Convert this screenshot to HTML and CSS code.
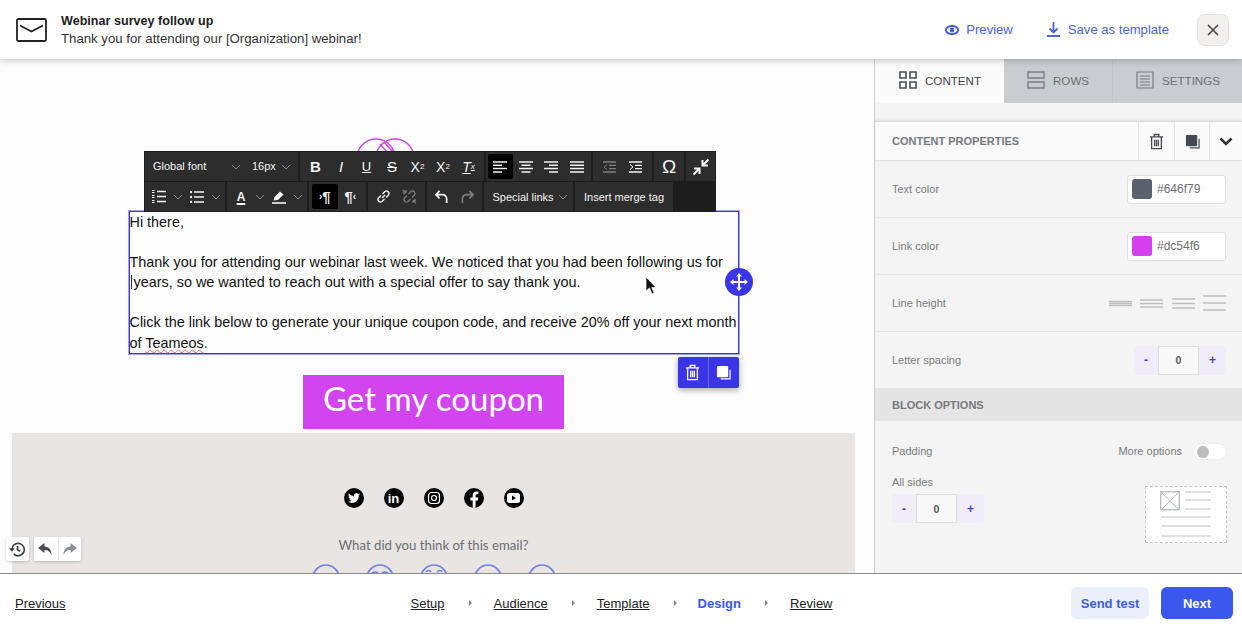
FILE: index.html
```html
<!DOCTYPE html>
<html lang="en">
<head>
    <meta charset="UTF-8">
    <meta name="viewport" content="width=device-width, initial-scale=1.0">
    <link rel="stylesheet" href="styles.css">
    <title>Webinar survey follow up</title>
</head>
<body>
<svg class="defs" width="0" height="0">
    <symbol id="chev" viewBox="0 0 14 6"><path d="M3 1l4 4 4-4" fill="none" stroke="currentColor" stroke-width="1"/></symbol>
    <symbol id="trash" viewBox="0 0 16 18"><path d="M1 4h14M5.500 4V1.500h5V4M2.800 4v12.500h10.400V4M6 7v7M8 7v7M10 7v7" fill="none" stroke="currentColor" stroke-width="1.400"/></symbol>
    <symbol id="copy" viewBox="0 0 16 16"><path d="M5 14.700h10V5" fill="none" stroke="currentColor" stroke-width="1.300"/><rect x="1" y="1" width="12" height="12" rx="1" fill="currentColor"/></symbol>
    <symbol id="undo" viewBox="0 0 16 16"><path d="M6 2L2 6l4 4M2 6h7a4.500 4.500 0 0 1 4.500 4.500V15" fill="none" stroke="currentColor" stroke-width="1.800"/></symbol>
    <symbol id="redo" viewBox="0 0 16 16"><path d="M10 2l4 4-4 4M14 6H7a4.500 4.500 0 0 0-4.500 4.500V15" fill="none" stroke="currentColor" stroke-width="1.800"/></symbol>
    <symbol id="al" viewBox="0 0 14 12"><path d="M0 1h14M0 4.300h9M0 7.600h14M0 11h9" stroke="currentColor" stroke-width="1.500"/></symbol>
    <symbol id="ac" viewBox="0 0 14 12"><path d="M0 1h14M2.500 4.300h9M0 7.600h14M2.500 11h9" stroke="currentColor" stroke-width="1.500"/></symbol>
    <symbol id="ar" viewBox="0 0 14 12"><path d="M0 1h14M5 4.300h9M0 7.600h14M5 11h9" stroke="currentColor" stroke-width="1.500"/></symbol>
    <symbol id="aj" viewBox="0 0 14 12"><path d="M0 1h14M0 4.300h14M0 7.600h14M0 11h14" stroke="currentColor" stroke-width="1.500"/></symbol>
</svg>

<header class="topbar">
    <svg class="mail-icon" viewBox="0 0 32 24"><rect x="1" y="1" width="29" height="22" rx="1.500" fill="none" stroke="#222" stroke-width="1.800"/><path d="M4 7.500l11.500 6 11.500-6" fill="none" stroke="#222" stroke-width="1.800"/></svg>
    <div class="topbar-title">
        <div class="title-main">Webinar survey follow up</div>
        <div class="title-sub">Thank you for attending our [Organization] webinar!</div>
    </div>
    <a class="top-link link-preview">
        <svg width="14" height="10" viewBox="0 0 14 10"><ellipse cx="7" cy="5" rx="6.100" ry="4.100" fill="none" stroke="currentColor" stroke-width="2"/><circle cx="7" cy="5" r="2.400" fill="currentColor"/></svg>
        Preview
    </a>
    <a class="top-link link-save">
        <svg width="13" height="15" viewBox="0 0 13 15"><path d="M6.500 0v10M2.500 6.500l4 4 4-4M0 14h13" fill="none" stroke="currentColor" stroke-width="1.800"/></svg>
        Save as template
    </a>
    <button class="close-btn"><svg width="12" height="12" viewBox="0 0 12 12"><path d="M1 1l10 10M11 1L1 11" stroke="#444" stroke-width="1.500"/></svg></button>
</header>

<div class="workspace">
    <main class="canvas">
        <div class="email">
            <svg class="logo" viewBox="0 0 156 73"><circle cx="20" cy="20" r="19" fill="none" stroke="#c94ae6" stroke-width="1.500"/><circle cx="39" cy="20" r="19" fill="none" stroke="#c94ae6" stroke-width="1.500"/><path d="M24 6l16 18M28 4l16 18" stroke="#c94ae6" stroke-width="1.500"/></svg>

            <div class="text-block">
                <p>Hi there,</p>
                <p>Thank you for attending our webinar last week. We noticed that you had been following us for<br><span class="caret"></span>years, so we wanted to reach out with a special offer to say thank you.</p>
                <p>Click the link below to generate your unique coupon code, and receive 20% off your next month<br>of <span class="typo">Teameos</span>.</p>
                <div class="move-handle">
                    <svg width="20" height="20" viewBox="0 0 20 20"><path d="M10 1l3 3.500h-2v4.500h4.500v-2L19 10l-3.500 3v-2H11v4.500h2L10 19l-3-3.500h2V11H4.500v2L1 10l3.500-3v2H9V4.500H7z" fill="#fff"/></svg>
                </div>
                <div class="block-actions">
                    <button><svg width="15" height="17"><use href="#trash"/></svg></button>
                    <button><svg width="15" height="15"><use href="#copy"/></svg></button>
                </div>
            </div>

            <a class="coupon-btn">Get my coupon</a>

            <div class="email-footer">
                <div class="socials">
                    <span class="social"><svg width="12" height="12" viewBox="0 0 24 24"><path fill="#fff" d="M23.953 4.570a10 10 0 0 1-2.825.775 4.958 4.958 0 0 0 2.163-2.723c-.951.555-2.005.959-3.127 1.184a4.920 4.920 0 0 0-8.384 4.482C7.690 8.095 4.067 6.130 1.640 3.162a4.822 4.822 0 0 0-.666 2.475c0 1.710.870 3.213 2.188 4.096a4.904 4.904 0 0 1-2.228-.616v.060a4.923 4.923 0 0 0 3.946 4.827 4.996 4.996 0 0 1-2.212.085 4.936 4.936 0 0 0 4.604 3.417 9.867 9.867 0 0 1-6.102 2.105c-.390 0-.779-.023-1.170-.067a13.995 13.995 0 0 0 7.557 2.209c9.053 0 13.998-7.496 13.998-13.985 0-.210 0-.420-.015-.630A9.935 9.935 0 0 0 24 4.590z"/></svg></span>
                    <span class="social social-in">in</span>
                    <span class="social"><svg width="14" height="14" viewBox="0 0 14 14"><rect x="1.500" y="1.500" width="11" height="11" rx="3" fill="none" stroke="#fff" stroke-width="1.200"/><circle cx="7" cy="7" r="2.500" fill="none" stroke="#fff" stroke-width="1.200"/></svg></span>
                    <span class="social"><svg width="20" height="20" viewBox="0 0 20 20"><path fill="#fff" d="M8.700 20v-7.500H6.400V9.600h2.300V7.500c0-2.500 1.500-3.900 3.700-3.900.9 0 1.700.1 2 .1v2.600h-1.400c-1.100 0-1.400.6-1.400 1.400v1.900h2.700l-.4 2.900h-2.300V20z"/></svg></span>
                    <span class="social"><svg width="13" height="10" viewBox="0 0 13 10"><rect width="13" height="10" rx="2.500" fill="#fff"/><path d="M5 2.500v5L9 5z" fill="#000"/></svg></span>
                </div>
                <p class="survey-q">What did you think of this email?</p>
                <div class="faces">
                    <svg viewBox="0 0 28 28"><circle cx="14" cy="14" r="13"/></svg>
                    <svg viewBox="0 0 28 28"><circle cx="14" cy="14" r="13"/><path d="M6 9q3-2 6 0M16 9q3-2 6 0"/></svg>
                    <svg viewBox="0 0 28 28"><circle cx="14" cy="14" r="13"/><path d="M6 8q3-3 5 0M17 8q3-3 5 0"/></svg>
                    <svg viewBox="0 0 28 28"><circle cx="14" cy="14" r="13"/></svg>
                    <svg viewBox="0 0 28 28"><circle cx="14" cy="14" r="13"/></svg>
                </div>
            </div>
        </div>

        <div class="toolbar">
            <div class="tb-row">
                <div class="tb-group g-font">
                    <span class="tb-select s-font">Global font</span><svg class="chev"><use href="#chev"/></svg>
                    <span class="tb-select s-size">16px</span><svg class="chev"><use href="#chev"/></svg>
                </div>
                <div class="tb-group g-marks">
                    <span class="tb t-b">B</span>
                    <span class="tb t-i">I</span>
                    <span class="tb t-u">U</span>
                    <span class="tb t-s">S</span>
                    <span class="tb">X<sup>2</sup></span>
                    <span class="tb">X<sub>2</sub></span>
                    <span class="tb t-clear">T<sub>x</sub></span>
                </div>
                <div class="tb-group g-align">
                    <span class="tb active"><svg width="14" height="12"><use href="#al"/></svg></span>
                    <span class="tb"><svg width="14" height="12"><use href="#ac"/></svg></span>
                    <span class="tb"><svg width="14" height="12"><use href="#ar"/></svg></span>
                    <span class="tb"><svg width="14" height="12"><use href="#aj"/></svg></span>
                </div>
                <div class="tb-group g-indent">
                    <span class="tb muted"><svg width="13" height="12" viewBox="0 0 13 12"><path d="M0 1h13M6 4.300h7M6 7.600h7M0 11h13" stroke="currentColor" stroke-width="1.300"/><path d="M4 3.500L1 6l3 2.500" fill="none" stroke="currentColor"/></svg></span>
                    <span class="tb"><svg width="13" height="12" viewBox="0 0 13 12"><path d="M0 1h13M6 4.300h7M6 7.600h7M0 11h13" stroke="currentColor" stroke-width="1.300"/><path d="M1 3.500L4 6 1 8.500" fill="none" stroke="currentColor"/></svg></span>
                </div>
                <div class="tb-group g-one"><span class="tb t-omega">Ω</span></div>
                <div class="tb-group g-last">
                    <span class="tb"><svg width="18" height="18" viewBox="0 0 18 18"><path d="M16.500 1.500L11 7M10.500 2v5.500H16M1.500 16.500L7 11M2 10.500h5.500V16" fill="none" stroke="currentColor" stroke-width="2"/></svg></span>
                </div>
            </div>
            <div class="tb-row">
                <div class="tb-group g-80">
                    <span class="tb t24"><svg width="14" height="13" viewBox="0 0 14 13"><path d="M5 1.500h9M5 6.500h9M5 11.500h9" stroke="currentColor" stroke-width="1.400"/><path d="M0 .5h2.500M0 2.500h2.500M0 5.500h2.500M0 7.500h2.500M0 10.500h2.500M0 12.500h2.500" stroke="currentColor"/></svg></span><svg class="chev"><use href="#chev"/></svg>
                    <span class="tb t24"><svg width="14" height="12" viewBox="0 0 14 12"><path d="M4 1h10M4 6h10M4 11h10" stroke="currentColor" stroke-width="1.400"/><circle cx="1" cy="1" r="1.200" fill="currentColor"/><circle cx="1" cy="6" r="1.200" fill="currentColor"/><circle cx="1" cy="11" r="1.200" fill="currentColor"/></svg></span><svg class="chev"><use href="#chev"/></svg>
                </div>
                <div class="tb-group g-80">
                    <span class="tb t24 t-color">A</span><svg class="chev"><use href="#chev"/></svg>
                    <span class="tb t24"><svg width="14" height="14" viewBox="0 0 14 14"><path d="M0 13h14" stroke="currentColor" stroke-width="1.600"/><path d="M1.500 10.500l1-3.500L8 1.500l3.500 3L6 10z" fill="currentColor"/></svg></span><svg class="chev"><use href="#chev"/></svg>
                </div>
                <div class="tb-group g-57">
                    <span class="tb t-para active"><small>›</small>¶</span>
                    <span class="tb t-para">¶<small>‹</small></span>
                </div>
                <div class="tb-group g-57">
                    <span class="tb"><svg width="15" height="15" viewBox="0 0 15 15"><path d="M6 9l3-3M5 6.500L2.500 9a2.500 2.500 0 0 0 3.500 3.500L8.500 10M6.500 5L9 2.500A2.500 2.500 0 0 1 12.500 6L10 8.500" fill="none" stroke="currentColor" stroke-width="1.400"/></svg></span>
                    <span class="tb muted"><svg width="15" height="15" viewBox="0 0 15 15"><path d="M5 6.500L2.500 9a2.500 2.500 0 0 0 3.500 3.500L8.500 10M6.500 5L9 2.500A2.500 2.500 0 0 1 12.500 6L10 8.500M1 1l3 3M11 11l3 3M4 1v2M1 4h2M11 14v-2M14 11h-2" fill="none" stroke="currentColor" stroke-width="1.300"/></svg></span>
                </div>
                <div class="tb-group g-55">
                    <span class="tb"><svg width="15" height="15"><use href="#undo"/></svg></span>
                    <span class="tb muted"><svg width="15" height="15"><use href="#redo"/></svg></span>
                </div>
                <div class="tb-group g-special">Special links<svg class="chev"><use href="#chev"/></svg></div>
                <div class="tb-group g-merge">Insert merge tag</div>
            </div>
        </div>

        <div class="history">
            <button class="hist-btn"><svg width="17" height="17" viewBox="0 0 15 15"><path d="M2.500 7.500a5.500 5.500 0 1 1 1.800 4.100M7.500 4.500v3.300l2.300 1.300" fill="none" stroke="#3c4043" stroke-width="1.500"/><path d="M0 6.500h5L2.500 9.500z" fill="#3c4043"/></svg></button>
            <div class="hist-pair">
                <button class="hist-btn"><svg width="15" height="13" viewBox="0 0 15 13"><path d="M6.500 0L0 5l6.500 5V7c3.500 0 5.500 1.500 7 5 0-5-2.500-8.500-7-8.500z" fill="#4a4e52"/></svg></button>
                <button class="hist-btn"><svg width="15" height="13" viewBox="0 0 15 13"><path d="M8.500 0L15 5l-6.500 5V7c-3.500 0-5.500 1.500-7 5 0-5 2.500-8.500 7-8.500z" fill="#8b8f92"/></svg></button>
            </div>
        </div>

        <svg class="pointer" width="13" height="19" viewBox="0 0 13 19"><path d="M1 1v14l3.500-3 2.500 6 2.200-1-2.500-5.500H11z" fill="#111" stroke="#fff" stroke-width=".7"/></svg>
    </main>

    <aside class="sidebar">
        <nav class="tabs">
            <div class="tab tab-active">
                <svg width="18" height="18" viewBox="0 0 18 18"><path d="M1 1h6v6H1zM11 1h6v6h-6zM1 11h6v6H1zM11 11h6v6h-6z" fill="none" stroke="#4a4e52" stroke-width="1.600"/></svg>
                CONTENT
            </div>
            <div class="tab tab-rows">
                <svg width="18" height="18" viewBox="0 0 18 18"><path d="M1 1h16v6H1zM1 11h16v6H1z" fill="none" stroke="#7b7f84" stroke-width="1.400"/></svg>
                ROWS
            </div>
            <div class="tab tab-settings">
                <svg width="18" height="18" viewBox="0 0 18 18"><path d="M1 1h16v16H1zM4 5h10M4 8h10M4 11h10M4 14h10" fill="none" stroke="#7b7f84" stroke-width="1.200"/></svg>
                SETTINGS
            </div>
        </nav>

        <div class="props-head">
            <span>CONTENT PROPERTIES</span>
            <button class="head-btn btn-trash"><svg width="15" height="17"><use href="#trash"/></svg></button>
            <button class="head-btn btn-copy"><svg width="15" height="15"><use href="#copy"/></svg></button>
            <button class="head-btn btn-chev"><svg width="14" height="9" viewBox="0 0 14 9"><path d="M1.500 1.500L7 7l5.500-5.500" fill="none" stroke="#333" stroke-width="2.600"/></svg></button>
        </div>

        <div class="prop-row row-color">
            <span>Text color</span>
            <div class="color-input"><i class="swatch swatch-text"></i>#646f79</div>
        </div>
        <div class="prop-row row-link">
            <span>Link color</span>
            <div class="color-input"><i class="swatch swatch-link"></i>#dc54f6</div>
        </div>
        <div class="prop-row row-lh">
            <span>Line height</span>
            <div class="lh-icons">
                <svg viewBox="0 0 23 16"><path d="M0 6.500h23M0 8.500h23M0 10.500h23"/></svg>
                <svg viewBox="0 0 23 16"><path d="M0 5h23M0 8.500h23M0 12h23"/></svg>
                <svg viewBox="0 0 23 16"><path d="M0 4h23M0 8.500h23M0 13h23"/></svg>
                <svg viewBox="0 0 23 16"><path d="M0 1h23M0 8h23M0 15h23"/></svg>
            </div>
        </div>
        <div class="prop-row row-ls">
            <span>Letter spacing</span>
            <div class="stepper"><button>-</button><b>0</b><button>+</button></div>
        </div>

        <div class="section-head">BLOCK OPTIONS</div>
        <div class="padding-box">
            <div class="padding-top">
                <span>Padding</span>
                <span class="more">More options</span>
                <i class="toggle"></i>
            </div>
            <div class="padding-bottom">
                <div>
                    <div class="all-sides">All sides</div>
                    <div class="stepper"><button>-</button><b>0</b><button>+</button></div>
                </div>
                <div class="pad-preview">
                    <svg width="52" height="47" viewBox="0 0 52 47"><rect x=".7" y=".7" width="18.600" height="18" fill="none" stroke="#b9bec0" stroke-width="1.400"/><path d="M1 1l18 18M19 1L1 19" stroke="#b9bec0"/><path d="M25 1h26M25 9h26M25 18h26M1 26h50M1 35h50M1 45h50" stroke="#bcc6c4" stroke-width="1.200"/></svg>
                </div>
            </div>
        </div>
    </aside>
</div>

<footer class="bottombar">
    <a class="prev">Previous</a>
    <nav class="steps">
        <a>Setup</a><i class="arrow"></i>
        <a>Audience</a><i class="arrow"></i>
        <a>Template</a><i class="arrow"></i>
        <a class="current">Design</a><i class="arrow"></i>
        <a>Review</a>
    </nav>
    <button class="btn btn-test">Send test</button>
    <button class="btn btn-next">Next</button>
</footer>
</body>
</html>
```

FILE: styles.css
```css
* {
    box-sizing: border-box;
}

html,
body {
    height: 100%;
}

body {
    margin: 0;
    display: flex;
    flex-direction: column;
    overflow: hidden;
    background: #fff;
    font-family: "Liberation Sans", Arial, sans-serif;
    color: #222;
}

button {
    font-family: inherit;
    border: none;
    padding: 0;
    background: none;
}

.defs {
    position: absolute;
}

/* top bar */
.topbar {
    height: 59px;
    flex: none;
    display: flex;
    align-items: center;
    padding: 0 13px 0 16px;
    background: #fff;
    box-shadow: 0 2px 7px rgba(0, 0, 0, 0.2);
    position: relative;
    z-index: 3;
}

.mail-icon {
    width: 32px;
    height: 24px;
    margin-right: 13px;
}

.topbar-title {
    flex: 1;
    line-height: 18px;
    font-size: 13.2px;
}

.title-main {
    font-weight: bold;
    font-size: 12.6px;
    color: #1c1c1c;
}

.title-sub {
    color: #333;
}

.top-link {
    display: flex;
    align-items: center;
    gap: 7px;
    font-size: 13.1px;
    color: #4a63d8;
}

.link-save {
    margin-left: 34px;
    gap: 8px;
}

.close-btn {
    width: 32px;
    height: 32px;
    margin-left: 28px;
    display: flex;
    align-items: center;
    justify-content: center;
    background: #f2f1ef;
    border: 1px solid #e4e2de;
    border-radius: 8px;
}

.workspace {
    flex: 1;
    min-height: 0;
    display: flex;
}

/* email canvas */
.canvas {
    width: 874px;
    flex: none;
    position: relative;
    overflow: hidden;
    background: #fdfdfd;
    padding-left: 12px;
}

.email {
    width: 843px;
    display: flex;
    flex-direction: column;
    align-items: center;
}

.logo {
    width: 156px;
    height: 73px;
    margin-top: 79px;
}

.text-block {
    position: relative;
    width: 610px;
    height: 143px;
    border: 1px solid #3b36d0;
    outline: 1px solid rgba(59, 54, 208, 0.45);
    font-size: 14.4px;
    line-height: 20.4px;
    color: #111;
    white-space: nowrap;
}

.text-block p {
    margin: 0 0 19.6px;
}

.caret {
    display: inline-block;
    width: 1px;
    height: 14px;
    margin: 0 2px 0 1px;
    vertical-align: -2px;
    background: #333;
}

.typo {
    text-decoration: underline wavy #e0607c 1px;
    text-underline-offset: 1px;
}

.move-handle {
    position: absolute;
    right: -15px;
    top: 56px;
    width: 28px;
    height: 28px;
    border-radius: 50%;
    background: #3a35e6;
    display: flex;
    align-items: center;
    justify-content: center;
}

.block-actions {
    position: absolute;
    right: -1px;
    top: 145px;
    width: 61px;
    height: 31px;
    display: flex;
    background: #3a35e6;
    border-radius: 2px;
    box-shadow: 0 2px 6px rgba(0, 0, 0, 0.35);
}

.block-actions button {
    flex: 1;
    display: flex;
    align-items: center;
    justify-content: center;
    color: #fff;
}

.block-actions button + button {
    border-left: 1px solid #6a66ee;
}

.coupon-btn {
    width: 261px;
    height: 54px;
    margin-top: 21px;
    padding-bottom: 9px;
    display: flex;
    align-items: center;
    justify-content: center;
    background: #d245ee;
    color: #fff;
    font-family: Lato, sans-serif;
    font-size: 33px;
}

.email-footer {
    width: 100%;
    height: 200px;
    margin-top: 4px;
    background: #e8e5e3;
    display: flex;
    flex-direction: column;
    align-items: center;
    padding-top: 55px;
}

.socials {
    display: flex;
    gap: 20px;
}

.social {
    width: 20px;
    height: 20px;
    border-radius: 50%;
    background: #050505;
    color: #fff;
    display: flex;
    align-items: center;
    justify-content: center;
    font-weight: bold;
    line-height: 1;
    overflow: hidden;
}

.social-in {
    font-size: 13px;
}

.survey-q {
    margin: 29px 0 0;
    font-family: Lato, sans-serif;
    font-size: 13.2px;
    line-height: 17px;
    color: #6b6f73;
}

.faces {
    display: flex;
    gap: 26px;
    margin-top: 10px;
}

.faces svg {
    width: 28px;
    height: 28px;
    fill: none;
    stroke: #6f7ff0;
    stroke-width: 1.700;
}

/* text editor toolbar */
.toolbar {
    position: absolute;
    left: 144px;
    top: 92px;
    width: 572px;
    height: 61px;
    background: #1d1d1d;
    border: 1px solid #1d1d1d;
    display: flex;
    flex-direction: column;
    gap: 1px;
    color: #f4f4f4;
    font-size: 11px;
}

.tb-row {
    flex: 1;
    display: flex;
    gap: 2px;
}

.tb-group {
    display: flex;
    align-items: center;
    justify-content: center;
    background: #2d2d2d;
}

.tb-select {
    margin-top: -2px;
}

.tb {
    width: 25.5px;
    height: 25px;
    flex: none;
    display: flex;
    align-items: center;
    justify-content: center;
    border-radius: 2px;
    font-size: 14px;
}

.tb sup,
.tb sub {
    font-size: 8px;
    line-height: 1;
}

.tb.active {
    background: #000;
}

.tb.muted {
    color: #7d7d7d;
}

.t24 {
    width: 24px;
}

.chev {
    width: 14px;
    height: 6px;
    flex: none;
    color: #8c8c8c;
}

.g-font {
    width: 153px;
    justify-content: flex-start;
    padding-left: 8px;
}

.s-font {
    width: 76px;
}

.s-size {
    width: 27px;
    margin-left: 9px;
}

.g-marks {
    width: 184px;
}

.g-align {
    width: 105px;
}

.g-indent {
    width: 59px;
}

.g-one {
    width: 30px;
}

.g-last {
    flex: 1;
}

.g-80 {
    width: 80px;
}

.g-57 {
    width: 57px;
}

.g-55 {
    width: 55px;
}

.g-special {
    width: 89px;
    gap: 2px;
    padding-left: 5px;
}

.g-merge {
    width: 98px;
}

.t-b {
    font-weight: bold;
    font-size: 15px;
}

.t-i {
    font-style: italic;
    font-size: 15px;
}

.t-u {
    text-decoration: underline;
    font-size: 13px;
}

.t-s {
    text-decoration: line-through;
    font-size: 15px;
}

.t-clear {
    font-style: italic;
    text-decoration: underline;
}

.t-omega {
    font-size: 19px;
}

.t-color {
    font-size: 12px;
    font-weight: bold;
    text-decoration: underline;
    text-decoration-thickness: 2px;
    text-underline-offset: 2px;
}

.t-para {
    font-size: 15px;
    font-weight: bold;
}

.t-para small {
    font-size: 10px;
}

/* undo and history buttons */
.history {
    position: absolute;
    left: 6px;
    top: 478px;
    display: flex;
    gap: 5px;
}

.hist-pair {
    display: flex;
    background: #fff;
    border-radius: 2px;
    box-shadow: 0 1px 3px rgba(0, 0, 0, 0.2);
}

.hist-btn {
    width: 23px;
    height: 24px;
    display: flex;
    align-items: center;
    justify-content: center;
    background: #fff;
    border-radius: 2px;
    box-shadow: 0 1px 3px rgba(0, 0, 0, 0.2);
}

.hist-pair .hist-btn {
    box-shadow: none;
    width: 23.5px;
}

.hist-pair .hist-btn + .hist-btn {
    border-left: 1px solid #e4e4e4;
}

.pointer {
    position: absolute;
    left: 645px;
    top: 217px;
}

/* side panel */
.sidebar {
    flex: 1;
    display: flex;
    flex-direction: column;
    background: #f4f4f4;
    border-left: 1px solid #cfcfcf;
    font-size: 11px;
    color: #787c80;
}

.tabs {
    height: 44px;
    flex: none;
    display: flex;
    font-size: 11.6px;
    color: #6d7175;
    background: #c9ccd0;
}

.tab {
    display: flex;
    align-items: center;
    gap: 8px;
    padding-left: 24px;
    padding-bottom: 2px;
}

.tab-active {
    width: 129px;
    background: #fbfbfb;
    color: #3f4347;
}

.tab-rows {
    width: 109px;
    border-right: 1px solid #bfc2c6;
    padding-left: 23px;
}

.tab-settings {
    flex: 1;
    padding-left: 23px;
}

.props-head {
    height: 40px;
    flex: none;
    margin-top: 18px;
    display: flex;
    align-items: center;
    background: #fbfbfb;
    border-top: 1px solid #ddd;
    border-bottom: 1px solid #e3e3e3;
    box-shadow: 0 -1px 3px rgba(0, 0, 0, 0.1);
    padding-left: 17px;
    font-weight: bold;
    color: #767a7e;
}

.props-head span {
    flex: 1;
}

.head-btn {
    height: 39px;
    width: 35px;
    display: flex;
    align-items: center;
    justify-content: center;
    border-left: 1px solid #e3e3e3;
    color: #45494d;
}

.btn-trash {
    width: 36px;
}

.btn-chev {
    width: 33px;
}

.prop-row {
    height: 57px;
    flex: none;
    display: flex;
    align-items: center;
    justify-content: space-between;
    padding: 0 16px 0 17px;
    border-bottom: 1px solid #e6e6e6;
}

.row-ls {
    height: 56px;
    border-bottom: none;
}

.color-input {
    width: 99px;
    height: 29px;
    display: flex;
    align-items: center;
    gap: 5px;
    padding-left: 4px;
    background: #fff;
    border: 1px solid #e0e0e0;
    border-radius: 3px;
    font-size: 12px;
    color: #6d7175;
}

.swatch {
    width: 20px;
    height: 20px;
    border-radius: 3px;
}

.swatch-text {
    background: #5a626d;
}

.swatch-link {
    background: #d340ec;
}

.lh-icons {
    display: flex;
    gap: 8.3px;
}

.lh-icons svg {
    width: 23px;
    height: 16px;
    fill: none;
    stroke: #bebebe;
    stroke-width: 1.400;
}

.stepper {
    width: 92px;
    height: 29px;
    display: flex;
    align-items: center;
    background: #f0ecfa;
    border-radius: 3px;
}

.stepper button {
    flex: 1;
    color: #3f3ae0;
    font-size: 12px;
    font-weight: bold;
}

.stepper button:first-child {
    flex: none;
    width: 24px;
}

.stepper b {
    width: 41px;
    height: 29px;
    display: flex;
    align-items: center;
    justify-content: center;
    background: #f8f8f8;
    border: 1px solid #ddd;
    color: #555;
    font-size: 10.5px;
}

.section-head {
    height: 33px;
    flex: none;
    display: flex;
    align-items: center;
    padding-left: 17px;
    background: #e5e5e5;
    font-weight: bold;
    color: #767a7e;
}

.padding-box {
    padding: 22px 15px 0 17px;
}

.padding-top {
    height: 16px;
    display: flex;
    align-items: center;
}

.padding-top span:first-child {
    flex: 1;
}

.toggle {
    width: 34px;
    height: 17px;
    margin-left: 11px;
    position: relative;
    background: #fff;
    border: 1px solid #eee;
    border-radius: 9px;
}

.toggle::before {
    content: "";
    position: absolute;
    left: 3px;
    top: 2px;
    width: 12px;
    height: 12px;
    border-radius: 50%;
    background: #bdbdbd;
}

.padding-bottom {
    display: flex;
    justify-content: space-between;
    margin-top: 17px;
}

.all-sides {
    margin-bottom: 5px;
    line-height: 13px;
}

.pad-preview {
    width: 82px;
    height: 57px;
    display: flex;
    align-items: center;
    justify-content: center;
    background: #fff;
    border: 1px dashed #c5c9c9;
    margin-top: 10px;
}

/* bottom bar */
.bottombar {
    height: 59px;
    flex: none;
    display: flex;
    align-items: center;
    padding: 0 9px 0 15px;
    border-top: 1px solid #8a8a8a;
    background: #fff;
    font-size: 13px;
    position: relative;
    z-index: 2;
}

.bottombar a {
    text-decoration: underline;
    color: #222;
}

.steps {
    flex: 1;
    display: flex;
    align-items: center;
    margin-left: 345px;
}

.bottombar .current {
    color: #3b58ee;
    font-weight: bold;
    text-decoration: none;
}

.arrow {
    width: 0;
    height: 0;
    margin: 0 22px 0 24px;
    border-left: 3px solid #8a8a8a;
    border-top: 3px solid transparent;
    border-bottom: 3px solid transparent;
}

.arrow:nth-of-type(3) {
    margin-right: 21px;
}

.btn {
    height: 32px;
    border-radius: 6px;
    font-size: 13px;
    font-weight: bold;
}

.btn-test {
    width: 78px;
    background: #ebeffb;
    color: #3f5be0;
}

.btn-next {
    width: 72px;
    margin-left: 12px;
    background: #3b58ee;
    color: #fff;
}
```
